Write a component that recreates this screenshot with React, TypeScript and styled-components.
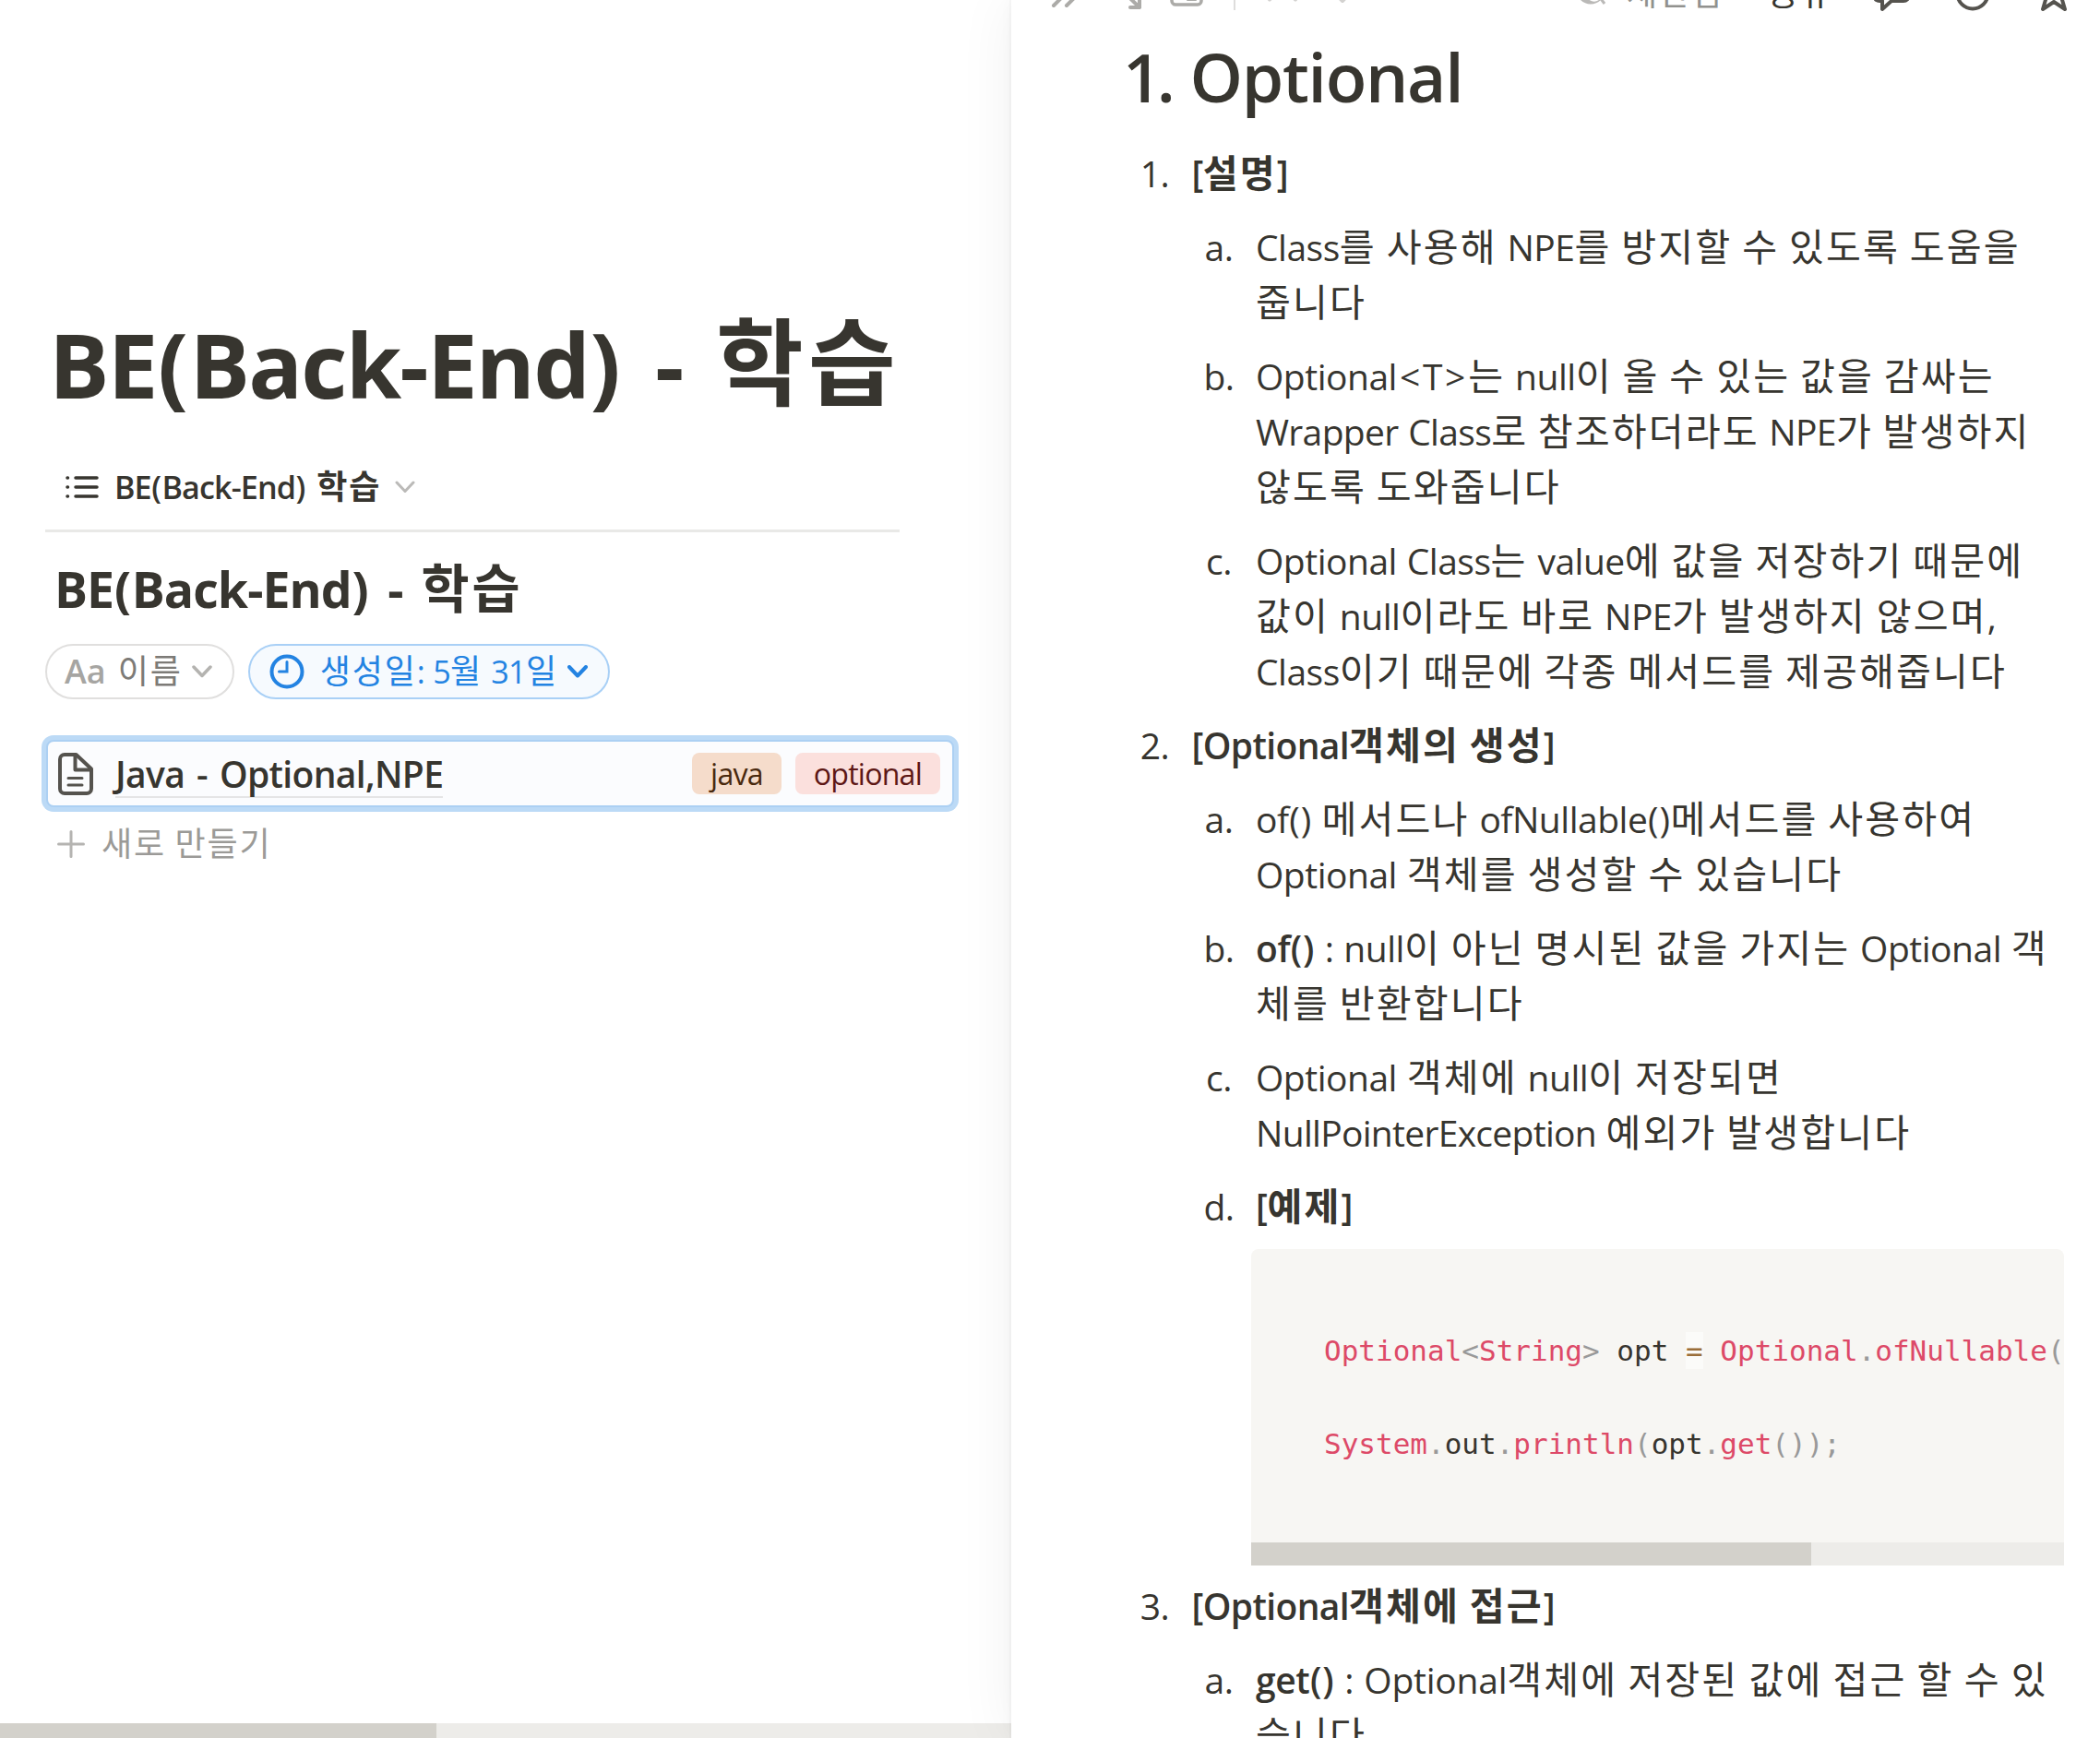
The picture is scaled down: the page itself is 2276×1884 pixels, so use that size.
import React from 'react';
import styled, { createGlobalStyle } from 'styled-components';

const RUNS = /([\u1100-\u11ff\u3130-\u318f\uac00-\ud7af]+|[<>]|[()])/;

type MixedProps = { children: string; track?: number; word?: number };

// Latin and Hangul runs are sized separately so that they sit evenly on one line
const Mixed = ({ children, track = -0.0125, word = 0.03 }: MixedProps) => (
    <>
        {children.split(RUNS).map((run, i) => {
            if (run === '') return null;
            if (i % 2 === 0) return <Latin key={i} $track={track} $word={word}>{run}</Latin>;
            if (/[<>]/.test(run)) return <Sign key={i} $side={0.075}>{run}</Sign>;
            if (/[()]/.test(run)) return <Sign key={i} $side={0.014}>{run}</Sign>;
            return <Hangul key={i}>{run}</Hangul>;
        })}
    </>
);

type LineData = string | { bold?: string; rest: string; track?: number };
type ItemData = { marker: string; lines: LineData[] };
type GroupData = { marker: string; title: string; items: ItemData[]; code?: boolean };

const groups: GroupData[] = [
    {
        marker: '1.',
        title: '[설명]',
        items: [
            { marker: 'a.', lines: ['Class를 사용해 NPE를 방지할 수 있도록 도움을', '줍니다'] },
            {
                marker: 'b.',
                lines: [
                    'Optional<T>는 null이 올 수 있는 값을 감싸는',
                    { rest: 'Wrapper Class로 참조하더라도 NPE가 발생하지', track: -0.017 },
                    '않도록 도와줍니다',
                ],
            },
            {
                marker: 'c.',
                lines: [
                    'Optional Class는 value에 값을 저장하기 때문에',
                    '값이 null이라도 바로 NPE가 발생하지 않으며,',
                    'Class이기 때문에 각종 메서드를 제공해줍니다',
                ],
            },
        ],
    },
    {
        marker: '2.',
        title: '[Optional객체의 생성]',
        code: true,
        items: [
            { marker: 'a.', lines: ['of() 메서드나 ofNullable()메서드를 사용하여', 'Optional 객체를 생성할 수 있습니다'] },
            { marker: 'b.', lines: [{ bold: 'of()', rest: ' : null이 아닌 명시된 값을 가지는 Optional 객' }, '체를 반환합니다'] },
            {
                marker: 'c.',
                lines: ['Optional 객체에 null이 저장되면', { rest: 'NullPointerException 예외가 발생합니다', track: -0.018 }],
            },
            { marker: 'd.', lines: [{ bold: '[예제]', rest: '' }] },
        ],
    },
    {
        marker: '3.',
        title: '[Optional객체에 접근]',
        items: [
            {
                marker: 'a.',
                lines: [{ bold: 'get()', rest: ' : Optional객체에 저장된 값에 접근 할 수 있', track: -0.006 }, '습니다'],
            },
        ],
    },
];

const Chevron = ({ color, width }: { color: string; width: number }) => (
    <svg width="22" height="14" viewBox="0 0 22 14" fill="none" stroke={color} strokeWidth={width} strokeLinecap="round" strokeLinejoin="round">
        <path d="M2 2l9 9.5L20 2" />
    </svg>
);

const Line = ({ line }: { line: LineData }) => (
    <TextLine>
        {typeof line === 'string' ? (
            <Mixed>{line}</Mixed>
        ) : (
            <>
                {line.bold && <b><Mixed track={-0.01}>{line.bold}</Mixed></b>}
                <Mixed track={line.track}>{line.rest}</Mixed>
            </>
        )}
    </TextLine>
);

const CodeBlock = () => (
    <StyledCode>
        <pre>
            <Name>Optional</Name><Punct>&lt;</Punct><Name>String</Name><Punct>&gt;</Punct> opt <Operator>=</Operator>{' '}
            <Name>Optional</Name><Punct>.</Punct><Name>ofNullable</Name><Punct>(</Punct>{'\n\n'}
            <Name>System</Name><Punct>.</Punct>out<Punct>.</Punct><Name>println</Name><Punct>(</Punct>opt<Punct>.</Punct>
            <Name>get</Name><Punct>());</Punct>
        </pre>
        <Scrollbar $height={25}>
            <Thumb $width={607} />
        </Scrollbar>
    </StyledCode>
);

const TopBar = () => (
    <StyledTopBar>
        <Tool $left={42}>
            <svg width="34" height="36" viewBox="0 0 34 36" fill="none" stroke="#acaba8" strokeWidth="4" strokeLinecap="round" strokeLinejoin="round">
                <path d="M4 5l13 13L4 31M18 5l13 13L18 31" />
            </svg>
        </Tool>
        <Tool $left={28}>
            <svg width="38" height="36" viewBox="0 0 38 36" fill="none" stroke="#acaba8" strokeWidth="4" strokeLinecap="round" strokeLinejoin="round">
                <path d="M3 14V2h12M3 2l32 31M25 33h10V20" />
            </svg>
        </Tool>
        <Tool $left={30}>
            <svg width="36" height="36" viewBox="0 0 36 36" fill="none" stroke="#acaba8" strokeWidth="3.5" strokeLinejoin="round">
                <rect x="2" y="6" width="32" height="24" rx="4" />
                <rect x="18" y="16" width="11" height="10" rx="1" fill="#acaba8" stroke="none" />
            </svg>
        </Tool>
        <Divider />
        <Tool $left={35}>
            <svg width="32" height="36" viewBox="0 0 32 36" fill="none" stroke="#d3d2d0" strokeWidth="4" strokeLinecap="round" strokeLinejoin="round">
                <path d="M2 24.5l14-14 14 14" />
            </svg>
        </Tool>
        <Tool $left={33}>
            <svg width="32" height="36" viewBox="0 0 32 36" fill="none" stroke="#d3d2d0" strokeWidth="4" strokeLinecap="round" strokeLinejoin="round">
                <path d="M2 12l14 14 14-14" />
            </svg>
        </Tool>
        <Tool $left={238}>
            <svg width="32" height="36" viewBox="0 0 32 36" fill="none">
                <circle cx="15" cy="14" r="15.5" fill="#bab9b7" />
                <path d="M14 24q6 4 12-2" stroke="#fff" strokeWidth="2" />
                <path d="M24 21l6 8" stroke="#bab9b7" strokeWidth="3" />
            </svg>
        </Tool>
        <BarText $left={22} $color="#91918e"><Mixed>제한됨</Mixed></BarText>
        <BarText $left={48} $color="#37352f"><Mixed>공유</Mixed></BarText>
        <Tool $left={43}>
            <svg width="42" height="40" viewBox="0 0 42 40" fill="none" stroke="#55534e" strokeWidth="4" strokeLinejoin="round">
                <path d="M8 3h26a6 6 0 0 1 6 6v13a6 6 0 0 1-6 6H21l-10 9v-9H8a6 6 0 0 1-6-6V9a6 6 0 0 1 6-6z" />
            </svg>
        </Tool>
        <Tool $left={48}>
            <svg width="38" height="38" viewBox="0 0 38 38" fill="none" stroke="#55534e" strokeWidth="4" strokeLinecap="round">
                <circle cx="19" cy="19" r="16.5" />
                <path d="M19 9v10h-8" />
            </svg>
        </Tool>
        <Tool $left={48}>
            <svg width="42" height="40" viewBox="0 0 42 40" fill="none" stroke="#55534e" strokeWidth="4" strokeLinejoin="round">
                <path d="M21 3l5.200 12H39L29 23.500l4 13.500-12-8-12 8 4-13.500L3 15h12.800z" />
            </svg>
        </Tool>
    </StyledTopBar>
);

const App = () => {
    return (
        <StyledPage>
            <GlobalStyle />
            <Database>
                <DatabaseBody>
                    <PageTitle><Mixed track={-0.018} word={0.13}>BE(Back-End) - 학습</Mixed></PageTitle>
                    <ViewTab>
                        <svg width="36" height="28" viewBox="0 0 36 28" fill="none" stroke="#37352f" strokeWidth="3.5" strokeLinecap="round">
                            <path d="M11 4h23M11 14h23M11 24h23M2 4h.5M2 14h.5M2 24h.5" />
                        </svg>
                        <span><Mixed track={-0.026} word={0.1}>BE(Back-End) 학습</Mixed></span>
                        <Chevron color="#bbbab8" width={3} />
                    </ViewTab>
                    <ListTitle><Mixed track={-0.018} word={0.13}>BE(Back-End) - 학습</Mixed></ListTitle>
                    <Filters>
                        <Pill $gap={10}>
                            <Aa>Aa</Aa>
                            <PillLabel $left={13}><Mixed>이름</Mixed></PillLabel>
                            <Chevron color="#b4b3b0" width={3.5} />
                        </Pill>
                        <Pill $active $gap={10}>
                            <svg width="38" height="38" viewBox="0 0 38 38" fill="none" stroke="#2383e2" strokeWidth="4" strokeLinecap="round">
                                <circle cx="19" cy="19" r="16.5" />
                                <path d="M19 8.5V19h-8.5" strokeWidth="3" />
                            </svg>
                            <PillLabel $left={17}><Mixed track={-0.02}>생성일: 5월 31일</Mixed></PillLabel>
                            <Chevron color="#2383e2" width={4} />
                        </Pill>
                    </Filters>
                    <SelectedRow>
                        <svg width="38" height="46" viewBox="0 0 38 46" fill="none" stroke="#55534e" strokeWidth="4" strokeLinecap="round" strokeLinejoin="round">
                            <path d="M7 2h12.500L36 17.500V39a5 5 0 0 1-5 5H7a5 5 0 0 1-5-5V7a5 5 0 0 1 5-5z" />
                            <path d="M18.500 3v15.500H35" />
                            <path d="M11 27.500h15M11 35h15" strokeWidth="3" />
                        </svg>
                        <RowName><Mixed track={-0.017} word={0.09}>Java - Optional,NPE</Mixed></RowName>
                        <Tag $bg="#f5dccb" $color="#49290e"><Mixed track={-0.025}>java</Mixed></Tag>
                        <Tag $bg="#fbe0dd" $color="#5d1715"><Mixed track={-0.025}>optional</Mixed></Tag>
                    </SelectedRow>
                    <NewRow>
                        <svg width="30" height="30" viewBox="0 0 30 30" stroke="#b5b4b1" strokeWidth="3" strokeLinecap="round">
                            <path d="M15 1.500v27M1.500 15h27" />
                        </svg>
                        <span><Mixed>새로 만들기</Mixed></span>
                    </NewRow>
                </DatabaseBody>
                <Scrollbar $height={16}>
                    <Thumb $width={473} />
                </Scrollbar>
            </Database>
            <SidePeek>
                <TopBar />
                <Heading>
                    <Mixed track={-0.07}>1.</Mixed>
                    <Mixed track={-0.018} word={0.045}>{' Optional'}</Mixed>
                </Heading>
                <List>
                    {groups.map((group) => (
                        <React.Fragment key={group.marker}>
                            <Entry $left={125.5}>
                                <Marker><Mixed>{group.marker}</Mixed></Marker>
                                <TextLine><b><Mixed track={-0.016}>{group.title}</Mixed></b></TextLine>
                            </Entry>
                            {group.items.map((item) => (
                                <Entry key={item.marker} $left={195}>
                                    <Marker><Mixed>{item.marker}</Mixed></Marker>
                                    <div>
                                        {item.lines.map((line, i) => <Line key={i} line={line} />)}
                                    </div>
                                </Entry>
                            ))}
                            {group.code && <CodeBlock />}
                        </React.Fragment>
                    ))}
                </List>
            </SidePeek>
        </StyledPage>
    );
};

export default App;

const GlobalStyle = createGlobalStyle`
  * {
    box-sizing: border-box;
  }

  body {
    margin: 0;
    overflow: hidden;
    background-color: #fff;
    color: #37352f;
    font-family: "Open Sans", "Noto Sans CJK KR", sans-serif;
  }

  b {
    font-weight: 600;
  }

  svg {
    display: block;
    flex-shrink: 0;
  }
`

const Hangul = styled.span`
  font-family: "Noto Sans CJK KR", sans-serif;
  font-size: 1.03em;
  letter-spacing: 0.051em;
  line-height: 1;
`
const Latin = styled.span<{ $track: number; $word: number }>`
  font-size: 0.975em;
  letter-spacing: ${({ $track }) => $track}em;
  word-spacing: ${({ $word }) => $word}em;
`
const Sign = styled.span<{ $side: number }>`
  margin: 0 ${({ $side }) => $side}em;
  font-size: 0.975em;
`

const StyledPage = styled.div`
  display: flex;
  width: 2276px;
  height: 1884px;
  overflow: hidden;
  white-space: pre;
`
const Database = styled.section`
  width: 1096px;
  display: flex;
  flex-direction: column;
`
const DatabaseBody = styled.div`
  flex: 1;
  display: flex;
  flex-direction: column;
  align-items: flex-start;
  padding: 333px 0 0 49px;
`
const PageTitle = styled.h1`
  margin: 0;
  padding-left: 4px;
  font-size: 100px;
  line-height: 120px;
  font-weight: 700;
`
const ViewTab = styled.div`
  display: flex;
  align-items: center;
  width: 926px;
  height: 96px;
  margin-top: 26px;
  padding: 0 0 0 22px;
  border-bottom: 3px solid #e9e9e7;
  font-size: 35px;
  line-height: 42px;
  font-weight: 600;

  > span {
    margin: 0 15px 0 17px;
  }
`
const ListTitle = styled.h3`
  margin: 28px 0 0;
  padding-left: 10px;
  font-size: 55px;
  line-height: 66px;
  font-weight: 700;
`
const Filters = styled.div`
  display: flex;
  gap: 15px;
  margin-top: 26px;
`
const Pill = styled.div<{ $active?: boolean; $gap: number }>`
  display: flex;
  align-items: center;
  height: 60px;
  padding: 0 22px 0 ${({ $active }) => $active ? 21 : 19}px;
  border: 2px solid ${({ $active }) => $active ? '#a9d0f6' : '#e0dfde'};
  border-radius: 30px;
  background-color: ${({ $active }) => $active ? '#f6fafe' : '#fff'};
  color: ${({ $active }) => $active ? '#2383e2' : '#7d7b77'};
  font-size: 35px;
  line-height: 42px;

  > svg:last-child {
    margin-left: ${({ $gap }) => $gap}px;
  }
`
const Aa = styled.span`
  color: #a6a5a2;
  font-size: 36px;
  font-weight: 600;
`
const PillLabel = styled.span<{ $left: number }>`
  margin-left: ${({ $left }) => $left}px;
`
const SelectedRow = styled.div`
  display: flex;
  align-items: center;
  width: 984px;
  height: 73px;
  margin-top: 44px;
  margin-left: 1px;
  padding: 0 13px 0 11px;
  border: 2px solid #acd0f3;
  border-radius: 8px;
  box-shadow: 0 0 0 5px #bcdaf6;
  background-color: #fbfcfe;
`
const RowName = styled.span`
  margin: 2px auto 0 24px;
  border-bottom: 2px solid #e5e5e6;
  font-size: 40px;
  line-height: 49px;
  font-weight: 600;
`
const Tag = styled.span<{ $bg: string; $color: string }>`
  height: 45px;
  margin-left: 15px;
  padding: 0 20px;
  border-radius: 8px;
  background-color: ${({ $bg }) => $bg};
  color: ${({ $color }) => $color};
  font-size: 33px;
  line-height: 45px;
`
const NewRow = styled.div`
  display: flex;
  align-items: center;
  height: 50px;
  margin-top: 15px;
  padding-left: 13px;
  color: #9b9a97;
  font-size: 35px;
  line-height: 42px;

  > span {
    margin-left: 18px;
  }
`
const Scrollbar = styled.div<{ $height: number }>`
  height: ${({ $height }) => $height}px;
  background-color: #edece9;
`
const Thumb = styled.div<{ $width: number }>`
  width: ${({ $width }) => $width}px;
  height: 100%;
  background-color: #d3d1cb;
`

const SidePeek = styled.section`
  width: 1180px;
  background-color: #fff;
  box-shadow: 0 0 0 2px rgba(15, 15, 15, 0.02), 0 0 15px rgba(15, 15, 15, 0.03), 0 0 60px rgba(15, 15, 15, 0.06);
`
const StyledTopBar = styled.header`
  display: flex;
  align-items: center;
  height: 100px;
  margin-top: -57px;
`
const Tool = styled.div<{ $left: number }>`
  margin-left: ${({ $left }) => $left}px;
`
const Divider = styled.div`
  width: 2px;
  height: 36px;
  margin-left: 33px;
  background-color: #dedddc;
`
const BarText = styled.span<{ $left: number; $color: string }>`
  margin-left: ${({ $left }) => $left}px;
  color: ${({ $color }) => $color};
  font-size: 35px;
  line-height: 42px;
`
const Heading = styled.h2`
  display: flex;
  margin: -9px 0 0;
  padding-left: 121px;
  font-size: 75px;
  line-height: 98px;
  font-weight: 600;
`
const List = styled.div`
  display: flex;
  flex-direction: column;
  padding-top: 26px;
`
const Entry = styled.div<{ $left: number }>`
  display: flex;
  margin-bottom: 20px;
  padding-left: ${({ $left }) => $left}px;
`
const Marker = styled.span`
  width: 60px;
  margin-right: 10px;
  text-align: center;
  font-size: 40px;
  line-height: 60px;
`
const TextLine = styled.div`
  height: 60px;
  font-size: 40px;
  line-height: 60px;
`
const StyledCode = styled.div`
  width: 881px;
  margin: -4px 0 14px 260px;
  border-radius: 8px 8px 0 0;
  overflow: hidden;
  background-color: #f7f6f3;

  > pre {
    height: 318px;
    margin: 0;
    padding: 85px 0 0 79px;
    font-family: "DejaVu Sans Mono", monospace;
    font-size: 31px;
    line-height: 50.6px;
  }
`
const Name = styled.span`
  color: #dd4a68;
`
const Punct = styled.span`
  color: #999;
`
const Operator = styled.span`
  padding: 2px 0;
  background-color: rgba(255, 255, 255, 0.5);
  color: #9a6e3a;
`
